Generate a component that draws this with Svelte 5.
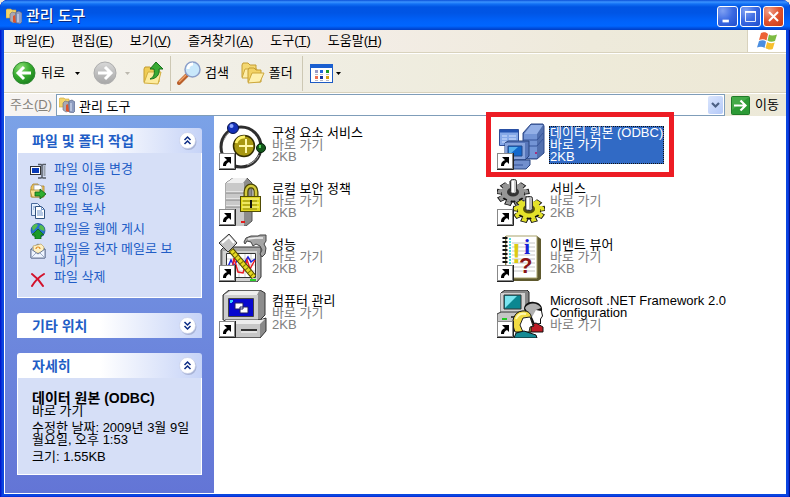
<script>
  const menus = [
    ['파일', 'F'],
    ['편집', 'E'],
    ['보기', 'V'],
    ['즐겨찾기', 'A'],
    ['도구', 'T'],
    ['도움말', 'H']
  ];

  const tasks = [
    { icon: 'rename', label: '파일 이름 변경' },
    { icon: 'move', label: '파일 이동' },
    { icon: 'copy', label: '파일 복사' },
    { icon: 'web', label: '파일을 웹에 게시' },
    { icon: 'mail', label: '파일을 전자 메일로 보내기' },
    { icon: 'delete', label: '파일 삭제' }
  ];

  const items = [
    { icon: 'component', name: '구성 요소 서비스', size: '2KB' },
    { icon: 'odbc', name: '데이터 원본 (ODBC)', size: '2KB' },
    { icon: 'security', name: '로컬 보안 정책', size: '2KB' },
    { icon: 'services', name: '서비스', size: '2KB' },
    { icon: 'performance', name: '성능', size: '2KB' },
    { icon: 'events', name: '이벤트 뷰어', size: '2KB' },
    { icon: 'computer', name: '컴퓨터 관리', size: '2KB' },
    { icon: 'dotnet', name: 'Microsoft .NET Framework 2.0 Configuration', size: '' }
  ];

  const teeth = [0, 40, 80, 120, 160, 200, 240, 280, 320];

  let selected = $state('odbc');
  let tasksOpen = $state(true);
  let placesOpen = $state(false);
  let detailsOpen = $state(true);
  let address = $state('관리 도구');
</script>

{#snippet toolsIcon()}
  <svg class="i16" viewBox="0 0 16 16" aria-hidden="true">
    <path d="M0 2l1-1h4l1 1h4v8H0z" fill="#f3d56b" stroke="#c9a23a" stroke-width=".6" />
    <path d="M4 6l2-2 4 1v9l-3 1-3-2z" fill="#a9a9b4" stroke="#666a78" stroke-width=".6" />
    <path d="M10 4l3-1 3 2v9l-2 2-4-1z" fill="#8d9cc0" stroke="#4d5878" stroke-width=".6" />
    <path d="M7 8l2-1 1 8-3-1z" fill="#e0532a" />
    <path d="M12 6v8" stroke="#dfe7fa" />
  </svg>
{/snippet}

{#snippet caret()}
  <svg class="caret" viewBox="0 0 5 3" aria-hidden="true"><path d="M0 0h5L2.500 3z" fill="currentColor" /></svg>
{/snippet}

{#snippet taskIcon(name)}
  <svg class="i16" viewBox="0 0 16 16" aria-hidden="true">
    {#if name === 'rename'}
      <rect x=".5" y="3.500" width="10" height="8" fill="#fff" stroke="#333" />
      <rect x="2" y="5" width="7" height="5" fill="#0a3bb8" />
      <path d="M8 1.500h3l1 1 1-1h3M12 2v12M8 15h3l1-1 1 1h3" fill="none" stroke="#555c66" stroke-width="1.500" />
      <path d="M14.500 3v10" stroke="#9aa2ad" stroke-width="2" />
    {:else if name === 'move'}
      <path d="M1 4l2-3h5l1 2h5v11H1z" fill="#f0c65a" stroke="#a8812a" stroke-width=".8" />
      <path d="M4 2h6l2 2v5H4z" fill="#fff" stroke="#8a94a8" stroke-width=".7" />
      <path d="M0 7h11l2 7H2z" fill="#fbe194" stroke="#a8812a" stroke-width=".7" />
      <path d="M5 9h5V6l6 5-6 5v-3H5z" fill="#2fae2f" stroke="#0c5f16" stroke-width=".8" />
    {:else if name === 'copy'}
      <path d="M1.500.5h6l3 3v9h-9z" fill="#e4eefc" stroke="#4a6a9c" />
      <path d="M5.500 3.500h6l3 3v9h-9z" fill="#fff" stroke="#33537f" />
      <path d="M11.500 3.500v3h3M7 8h5M7 10h6M7 12h6M3 4h2M3 6h1" fill="none" stroke="#6f93c9" />
    {:else if name === 'web'}
      <circle cx="8" cy="7.500" r="7" fill="#2871cf" stroke="#174886" stroke-width=".7" />
      <path d="M2 4c3-4 5-3 6-2L6 5 3 8zM10 2c3 0 5 3 4.500 6L11 7 9 5zM2 10l4 1v3c-2 0-4-2-4-4z" fill="#57bd4d" />
      <path d="M8 6l6 6h-3v4H5v-4H2z" fill="#1b9b27" stroke="#0b5e16" stroke-width=".7" />
    {:else if name === 'mail'}
      <path d="M1 6l7-5 7 5v9H1z" fill="#c8d4ea" stroke="#61718f" stroke-width=".9" />
      <path d="M3 3l8-2 3 3-1 6H4z" fill="#fdf0c4" stroke="#b29650" stroke-width=".6" />
      <path d="M6 6a2 2 0 1 1 4 0" fill="none" stroke="#e08a22" stroke-width="1.200" />
      <path d="M1 6l7 5 7-5v9H1z" fill="#eef4ff" stroke="#61718f" stroke-width=".9" />
      <path d="M1 15l5-5M15 15l-5-5" stroke="#8c9cba" stroke-width=".8" />
    {:else}
      <path d="M2 3c4 3 8 7 11 12M14 3C9 6 5 10 2 15" fill="none" stroke="#d3122c" stroke-width="2" stroke-linecap="round" />
    {/if}
  </svg>
{/snippet}

{#snippet gear(cx, cy, fill, dark)}
  <g transform="translate({cx} {cy}) scale(1 .75)">
    {#each teeth as a}
      <rect x="-3" y="-16" width="6" height="8" fill={fill} stroke="#111" transform="translate(0 2) rotate({a})" />
    {/each}
    <circle cy="2" r="12" fill="#111" />
    {#each teeth as a}
      <rect x="-2" y="-14" width="4" height="8" fill={fill} transform="rotate({a})" />
    {/each}
    <circle r="11.500" fill={fill} />
    <circle r="6" fill={dark} />
  </g>
{/snippet}

{#snippet fileIcon(name)}
  <svg class="i48" viewBox="0 0 48 48" aria-hidden="true">
    {#if name === 'component'}
      <circle cx="22" cy="25" r="20" fill="none" stroke="#2e2e2e" stroke-width="3" />
      <path d="M5 18a19 19 0 0 1 14-12M40 33a19 19 0 0 1-12 10" fill="none" stroke="#aaa" />
      <circle cx="14" cy="6" r="5.500" fill="#1431b8" stroke="#071248" />
      <circle cx="12.500" cy="4" r="2" fill="#90a9ff" />
      <circle cx="25" cy="24" r="10.500" fill="#a89812" stroke="#342e02" stroke-width="1.500" />
      <path d="M17 21a8 8 0 0 1 9-6" fill="none" stroke="#fff36c" stroke-width="3" />
      <path d="M27 17v14M20 24h14" stroke="#fff8a8" stroke-width="2" />
      <circle cx="42" cy="26" r="4.500" fill="#14591b" stroke="#03200a" />
      <path d="M41 23v3" stroke="#57d65b" stroke-width="2" />
    {:else if name === 'odbc'}
      <path d="M26 11l8-9h12l1 2v27l-7 6H26z" fill="#516fae" stroke="#2c4889" />
      <path d="M27 12l7-9h12l-6 9z" fill="#93afe6" />
      <path d="M27 12h13v24H27z" fill="#7394d5" />
      <path d="M27 18h13l6-7M27 24h13l6-7" fill="none" stroke="#36549a" />
      <path d="M38 31h2" stroke="#a6307c" stroke-width="2" />
      <path d="M2.500 7.500h19v16h-19z" fill="#86a9e8" stroke="#2f4f98" />
      <path d="M3 9h18" stroke="#2453b0" stroke-width="3" />
      <path d="M5 14h5M12 14h7M5 17h5M12 17h7M5 20h5" stroke="#d3e2ff" />
      <path d="M8 21l3-2h21v15l-4 4H8z" fill="#5877ba" stroke="#29447f" />
      <path d="M8 21h20v16H8z" fill="#88a4dc" />
      <path d="M11 24h14v10H11z" fill="#1268cc" stroke="#234888" />
      <path d="M12 33V25h9z" fill="#55b0ee" />
      <path d="M14 41l4-3h15v5l-4 4H14z" fill="#718fcd" stroke="#29447f" />
      <path d="M17 43h9" stroke="#36549a" />
    {:else if name === 'security'}
      <path d="M7 5l7-5h14l5 5v38l-6 5H7z" fill="#8c8c8c" stroke="#555" />
      <path d="M7 5l7-5h14l-4 5z" fill="#efefef" />
      <path d="M7 5h18v43H7z" fill="#c9c9c9" />
      <path d="M7 14h18M7 21h18M7 28h18" stroke="#fff" />
      <path d="M7 15h18l8-5M7 22h18M7 29h18" fill="none" stroke="#848484" />
      <path d="M22 44h4" stroke="#e11c1c" stroke-width="2" />
      <path d="M27 19v-5c0-8 10-8 10 0v5" fill="none" stroke="#4b4704" stroke-width="5" />
      <path d="M27 19v-5c0-8 10-8 10 0v5" fill="none" stroke="#d3c93d" stroke-width="2.500" />
      <rect x="21.500" y="18.500" width="20" height="15" fill="#e0d622" stroke="#514c05" />
      <path d="M23 21h17M23 25h17M23 29h17" stroke="#fffb9e" />
      <path d="M24 23h14M24 27h14M24 31h14" stroke="#8e860d" />
      <path d="M32 22v8" stroke="#111" stroke-width="2" />
    {:else if name === 'services'}
      {@render gear(16, 14, '#969696', '#333')}
      <rect x="13.500" y="1.500" width="6" height="14" rx="2" fill="#c8c8c8" stroke="#333" />
      <path d="M16 3v11" stroke="#fff" stroke-width="2" />
      {@render gear(32, 31, '#e4e22a', '#55520a')}
      <rect x="28.500" y="18.500" width="7" height="14" rx="2" fill="#b7b7b7" stroke="#333" />
      <path d="M31 20v11" stroke="#fff" stroke-width="2" />
    {:else if name === 'performance'}
      <path d="M2 16l3-3h37v30l-4 5H2z" fill="#a6a6a6" stroke="#333" />
      <path d="M4 17h34v30H4z" fill="#d2d2d2" />
      <path d="M7.500 19.500h29v24h-29z" fill="#fff" stroke="#333" />
      <path d="M8 25h28M8 31h28M8 37h28M14 20v23M20 20v23M26 20v23M32 20v23" stroke="#cfcfcf" />
      <path d="M8 35l4-9 3 6 5-9 4 8 5-8 3 5 4-3" fill="none" stroke="#1c22e4" stroke-width="1.500" />
      <path d="M9 39l4-3 2-12 4 14 5 1 4-13 3 9 5-9" fill="none" stroke="#ea1c24" stroke-width="1.500" />
      <path d="M12 16l23 27" stroke="#4a4300" stroke-width="6" />
      <path d="M12 16l23 27" stroke="#e6da21" stroke-width="4" />
      <path d="M12 16l23 27" stroke="#7c7200" stroke-width="4" stroke-dasharray="1 3" />
      <path d="M0 9L10 0l8 9-9 9z" fill="#c4c4c4" stroke="#333" />
      <path d="M3 9l7-6 5 6" fill="none" stroke="#fff" stroke-width="2" />
      <path d="M25 8l2-4 5-2h7l2-1h6v6l-2 3 2 4-1 6-3 3-2-3 2-4-2-4-4-2-3 2-2-4-4-1-2 3z" fill="#a4a4a4" stroke="#444" />
      <path d="M29 5l8-1h7" fill="none" stroke="#efefef" stroke-width="1.500" />
      <path d="M31 46h6" stroke="#28d028" stroke-width="2" />
    {:else if name === 'events'}
      <path d="M8 2h32l4 3v40l-3 2H8z" fill="#5e592e" />
      <path d="M9 2h31v42H9z" fill="#fff" stroke="#a9a26a" />
      <path d="M15 9h23M15 13h23M15 17h23M15 21h23M15 25h23M15 29h23M15 33h23M15 37h23" stroke="#c6c6c6" />
      <path d="M13 4v39" stroke="#4fdcdc" stroke-width="2" stroke-dasharray="2 1" />
      <path d="M8 3v41" stroke="#111" stroke-width="5" stroke-dasharray="2 2" />
      <g font-weight="700">
        <text x="15" y="29" font-size="27" fill="#dccb12">!</text>
        <text x="27" y="20" font-size="22" fill="#1822d8" font-family="Liberation Serif, serif">i</text>
        <text x="22" y="39" font-size="22" fill="#8b1414">?</text>
      </g>
    {:else if name === 'computer'}
      <path d="M4 5l6-5h31l5 3v22l-5 5H4z" fill="#8d8d8d" stroke="#333" />
      <path d="M5 5l6-4h29l-2 4z" fill="#eee" />
      <path d="M5 5h34v25H5z" fill="#cdcdcd" />
      <path d="M9.500 8.500h25v18h-25z" fill="#0808cf" stroke="#444" />
      <path d="M12 13v-2h2" fill="none" stroke="#3cf" stroke-width="2" />
      <path d="M16 13h8v6h-8zM21 17h8v6h-8z" fill="#fff" stroke="#202060" />
      <path d="M2 34l4-4h35l6-2v13l-6 7H2z" fill="#8a8a8a" stroke="#333" />
      <path d="M3 34h38v13H3z" fill="#c7c7c7" />
      <path d="M3 34l4-4h34l5-1-5 5z" fill="#ededed" />
      <path d="M22 40h16" stroke="#333" stroke-width="2" />
      <path d="M22 42h16" stroke="#fff" />
    {:else}
      <path d="M4 3l4-3h22l2 2v18l-3 3H4z" fill="#868686" stroke="#222" />
      <path d="M4 3h24v19H4z" fill="#d0d0d0" />
      <path d="M7 5h17v14H7z" fill="#0b8791" stroke="#333" />
      <path d="M8 18V6h12z" fill="#7be5ef" />
      <path d="M0 24l4-2h24v10H0z" fill="#c5c5c5" stroke="#333" />
      <path d="M5 29h5" stroke="#23c823" stroke-width="2" />
      <path d="M14 27h9" stroke="#444" stroke-width="2" />
      <path d="M27 19c0-5 5-8 10-7 5 0 9 4 8 9l1 5-2 3v5h-5l-6 2z" fill="#111" />
      <path d="M28 18c3-6 13-6 16 0l-5 2 1 6-4 2-4-3z" fill="#b0b0b0" />
      <path d="M39 20l5 1 1 5-2 3v4l-5 1-3-7z" fill="#fff" />
      <path d="M32 35l7-2 7 4v5H31z" fill="#be1d25" stroke="#111" />
      <path d="M17 39c-3-8 0-17 8-18 7-1 10 4 9 8l3 7-3 1v5H18z" fill="#f1db42" stroke="#111" />
      <path d="M26 28l7-1 3 9-3 1-1 5h-6l-3-7z" fill="#fff" stroke="#222" />
      <path d="M19 29c2-5 6-6 10-5" fill="none" stroke="#fff8b0" stroke-width="2" />
      <path d="M17 48l2-5 8-2 6 2 6 2 1 3z" fill="#168b94" stroke="#111" />
    {/if}
    <rect x=".5" y="31.500" width="15" height="15" fill="#fff" stroke="#888" />
    <path d="M0 47.500h16.500V31" fill="none" stroke="#222" />
    <path d="M5 35h7v7l-2-2c-2 1-3 2-3 4H4c0-4 2-5 4-6z" fill="#000" />
  </svg>
{/snippet}

{#snippet chevrons(open)}
  <svg class="chev" viewBox="0 0 18 18" aria-hidden="true">
    <circle cx="9.500" cy="10" r="8" fill="#a9b4d6" />
    <circle cx="8.500" cy="8.500" r="8" fill="#fff" stroke="#c3cbe6" stroke-width=".6" />
    <path d={open ? 'M5.500 8l3-3 3 3M5.500 12l3-3 3 3' : 'M5.500 5l3 3 3-3M5.500 9l3 3 3-3'} fill="none" stroke="#0c2c84" stroke-width="1.500" />
  </svg>
{/snippet}

<div class="window">
  <header class="title">
    {@render toolsIcon()}
    <h1>관리 도구</h1>
    <div class="controls">
      <button aria-label="최소화"><svg viewBox="0 0 21 21"><path d="M5 14h7v3H5z" fill="#fff" /></svg></button>
      <button aria-label="최대화"><svg viewBox="0 0 21 21"><path d="M5 5h11v11H5z" fill="none" stroke="#fff" /><path d="M4.500 5.500h12" stroke="#fff" stroke-width="2" /></svg></button>
      <button class="close" aria-label="닫기"><svg viewBox="0 0 21 21"><path d="M5.500 5.500l10 10M15.500 5.500l-10 10" stroke="#fff" stroke-width="2.200" /></svg></button>
    </div>
  </header>

  <div class="client">
    <nav class="menubar">
      <div class="menus">
        {#each menus as [label, key]}
          <button>{label}(<u>{key}</u>)</button>
        {/each}
      </div>
      <div class="brand">
        <svg viewBox="0 0 20 18" aria-hidden="true">
          <path d="M4 1c3-1 5-1 7 1L9.500 8.500C7.500 7 5 7 2 8z" fill="#ec6234" />
          <path d="M12 2.500c2 1.500 5 1 8 0L18 9c-3 1-5 1-7.500-.5z" fill="#7dbb42" />
          <path d="M2 9c3-1 5-1 7 .5L7.500 16c-2-2-5-1.500-7.500-.5z" fill="#4b8ee0" />
          <path d="M10.200 10c2 1.500 5 1.500 7.500.5l-2 6.500c-3 1-5 .5-7.200-1z" fill="#f7bf2e" />
        </svg>
      </div>
    </nav>

    <div class="toolbar">
      <button class="back">
        <svg class="i24" viewBox="0 0 24 24" aria-hidden="true">
          <defs><radialGradient id="g" cx=".35" cy=".25" r=".9"><stop offset="0" stop-color="#8ade74" /><stop offset=".5" stop-color="#35a92c" /><stop offset="1" stop-color="#13741a" /></radialGradient></defs>
          <circle cx="12" cy="12" r="11" fill="url(#g)" stroke="#2f8a31" />
          <path d="M19 12H7M12 6l-6 6 6 6" fill="none" stroke="#fff" stroke-width="3" />
        </svg>
        <span>뒤로</span>
        {@render caret()}
      </button>
      <button class="forward" aria-label="앞으로" disabled>
        <svg class="i24" viewBox="0 0 24 24" aria-hidden="true">
          <defs><linearGradient id="s" x2="0" y2="1"><stop offset="0" stop-color="#d8d8d8" /><stop offset="1" stop-color="#a6a6a6" /></linearGradient></defs>
          <circle cx="12" cy="12" r="11" fill="url(#s)" stroke="#adadad" />
          <path d="M5 12h12M12 6l6 6-6 6" fill="none" stroke="#fff" stroke-width="3" />
        </svg>
        {@render caret()}
      </button>
      <button class="up" aria-label="위로">
        <svg class="i24" viewBox="0 0 24 24" aria-hidden="true">
          <path d="M3 8l1-2h5l2 2h7v13H3z" fill="#f0cc55" stroke="#c29b2e" />
          <path d="M3 22l4-11h13l-3 12z" fill="#fdeb9d" stroke="#d2ae3f" />
          <path d="M9 18c4-2 5-5 4-10H9l6-7 7 7h-4c1 6-3 10-9 10z" fill="#39aa33" stroke="#15711c" />
        </svg>
      </button>
      <span class="sep"></span>
      <button class="search">
        <svg class="i24" viewBox="0 0 24 24" aria-hidden="true">
          <path d="M2 22l8-8" stroke="#b9602c" stroke-width="4" stroke-linecap="round" />
          <path d="M2 21l7-7" stroke="#f2a46a" stroke-width="1.500" />
          <circle cx="15.500" cy="8.500" r="7.500" fill="#c9e8fb" stroke="#8c9fc9" stroke-width="1.500" />
          <path d="M11 8c0-3 2-5 5-5" fill="none" stroke="#fff" stroke-width="3" />
        </svg>
        <span>검색</span>
      </button>
      <button class="folders">
        <svg class="i24" viewBox="0 0 24 24" aria-hidden="true">
          <path d="M1 4l1-2h5l2 2h6v12H1z" fill="#f4d873" stroke="#c39c33" />
          <path d="M1 17l3-9h12l-3 9z" fill="#fdedaa" stroke="#cda83d" />
          <path d="M7 9l1-2h5l2 2h5v12H7z" fill="#f2d265" stroke="#c39c33" />
          <path d="M7 22l4-10h12l-4 9z" fill="#fef0ae" stroke="#cda83d" />
        </svg>
        <span>폴더</span>
      </button>
      <span class="sep"></span>
      <button class="views" aria-label="보기">
        <svg viewBox="0 0 23 19" aria-hidden="true">
          <rect x=".5" y=".5" width="22" height="18" fill="#fff" stroke="#1c5ac4" />
          <path d="M0 0h23v4H0z" fill="#1a5fd0" />
          <path d="M5 6h3v3H5z" fill="#9a9ac6" /><path d="M10 6h3v3h-3z" fill="#1f66dd" /><path d="M16 6h3v3h-3z" fill="#169c28" />
          <path d="M5 12h3v3H5z" fill="#f07050" /><path d="M10 12h3v3h-3z" fill="#1433a0" /><path d="M16 12h3v3h-3z" fill="#d8a012" />
          <path d="M5 10.500h3M10 10.500h3M16 10.500h3M5 16.500h3M10 16.500h3M16 16.500h3" stroke="#b8b8c4" />
        </svg>
        {@render caret()}
      </button>
    </div>

    <div class="addressbar">
      <label for="address">주소(<u>D</u>)</label>
      <div class="combo">
        {@render toolsIcon()}
        <input id="address" type="text" bind:value={address} />
        <button aria-label="주소 목록"><svg viewBox="0 0 15 18" aria-hidden="true"><path d="M4 7l3.500 3.500L11 7" fill="none" stroke="#4d6185" stroke-width="2.200" /></svg></button>
      </div>
      <button class="go">
        <svg viewBox="0 0 19 19" aria-hidden="true">
          <rect x=".5" y=".5" width="18" height="18" rx="1" fill="#2c9a35" stroke="#1e7a28" />
          <path d="M1 1h17L1 14z" fill="#5cba5c" opacity=".5" />
          <path d="M3 9.500h11M9.500 4.500l5 5-5 5" fill="none" stroke="#fff" stroke-width="2.200" />
        </svg>
        <span>이동</span>
      </button>
    </div>

    <div class="content">
      <aside>
        <section>
          <h2><button onclick={() => (tasksOpen = !tasksOpen)} aria-expanded={tasksOpen}>파일 및 폴더 작업{@render chevrons(tasksOpen)}</button></h2>
          {#if tasksOpen}
            <ul class="body tasks">
              {#each tasks as task}
                <li><a href="#{task.icon}">{@render taskIcon(task.icon)}<span>{task.label}</span></a></li>
              {/each}
            </ul>
          {/if}
        </section>
        <section>
          <h2><button onclick={() => (placesOpen = !placesOpen)} aria-expanded={placesOpen}>기타 위치{@render chevrons(placesOpen)}</button></h2>
        </section>
        <section>
          <h2><button onclick={() => (detailsOpen = !detailsOpen)} aria-expanded={detailsOpen}>자세히{@render chevrons(detailsOpen)}</button></h2>
          {#if detailsOpen}
            <div class="body details">
              <p><strong>데이터 원본 (ODBC)</strong><br />바로 가기</p>
              <p>수정한 날짜: 2009년 3월 9일 월요일, 오후 1:53</p>
              <p>크기: 1.55KB</p>
            </div>
          {/if}
        </section>
      </aside>

      <main>
        {#each items as item}
          <button class="item" class:selected={selected === item.icon} onclick={() => (selected = item.icon)}>
            {@render fileIcon(item.icon)}
            <span class="text">
              <span class="name">{item.name}</span>
              <span>바로 가기</span>
              {#if item.size}<span>{item.size}</span>{/if}
            </span>
            {#if item.icon === 'odbc'}<span class="callout"></span>{/if}
          </button>
        {/each}
      </main>
    </div>
  </div>
</div>

<style>
  :global(body) {
    margin: 0;
    background: #eeeade;
  }
  * {
    box-sizing: border-box;
  }
  .window {
    display: flex;
    flex-direction: column;
    min-height: 100vh;
    padding: 0 4px 4px;
    border-radius: 8px 8px 0 0;
    background: #0a46e0;
    box-shadow: inset 1px 0 #0019cf, inset -1px -1px #00138c, inset 2px 0 #0831d9, inset -2px -2px #0831d9;
    font: 13px/16px "Liberation Sans", "Noto Sans CJK KR", sans-serif;
    color: #000;
  }
  button {
    display: flex;
    align-items: center;
    margin: 0;
    padding: 0;
    border: 0;
    background: none;
    font: inherit;
    color: inherit;
    text-align: left;
  }
  svg {
    display: block;
    flex: none;
  }
  .i16 {
    width: 16px;
    height: 16px;
  }
  .i24 {
    width: 24px;
    height: 24px;
  }
  .i48 {
    width: 48px;
    height: 48px;
  }
  .caret {
    width: 5px;
    height: 3px;
  }

  .title {
    display: flex;
    align-items: center;
    gap: 4px;
    height: 30px;
    margin: 0 -4px;
    padding: 2px 6px 0;
    border-radius: 8px 8px 0 0;
    background: linear-gradient(#0a4fd8 0, #3b93ff 2px, #1270f4 4px, #0054e3 7px, #0055e5 13px, #0062fa 21px, #0066ff 26px, #0050e0 28px, #003dc4 30px);
  }
  h1 {
    flex: 1;
    margin: 0;
    font-size: 15px;
    line-height: 20px;
    font-weight: 500;
    color: #fff;
    text-shadow: 1px 1px #0a2a80;
  }
  .controls {
    display: flex;
    gap: 2px;
  }
  .controls button {
    width: 21px;
    height: 21px;
    border: 1px solid #fff;
    border-radius: 3px;
    background: radial-gradient(circle at 25% 20%, #7fa0f2, #3a69e2 50%, #1f4dcc);
  }
  .controls svg {
    width: 19px;
    height: 19px;
  }
  .controls .close {
    background: radial-gradient(circle at 25% 20%, #f0a08a, #e0532f 50%, #c63a12);
  }

  .client {
    flex: 1;
    display: flex;
    flex-direction: column;
    background: linear-gradient(90deg, #f6f4f2, #f5eeea 35%, #eeeadb 75%, #ece9d8);
  }
  .menubar {
    display: flex;
    height: 23px;
    border-bottom: 1px solid #d8d2bd;
  }
  .menus {
    flex: 1;
    display: flex;
    gap: 17px;
    padding-left: 10px;
  }
  .brand {
    display: flex;
    align-items: center;
    justify-content: center;
    width: 39px;
    border-left: 1px solid #d8d2bd;
    background: #fff;
  }
  .brand svg {
    width: 20px;
    height: 18px;
  }
  .toolbar {
    display: flex;
    align-items: center;
    height: 40px;
    border-top: 1px solid #fff;
    border-bottom: 1px solid #d8d2bd;
    padding-left: 8px;
    background: linear-gradient(90deg, #f5f3ee, #f0eee4 35%, #eeebda 70%, #ede8d6);
  }
  .back {
    gap: 5px;
  }
  .back .caret {
    margin-left: 5px;
  }
  .forward {
    gap: 8px;
    margin-left: 13px;
    color: #bbb8ae;
  }
  .up {
    margin: 0 5px 0 11px;
  }
  .sep {
    width: 1px;
    height: 35px;
    background: #cdc8b4;
  }
  .search {
    gap: 4px;
    margin: 0 12px 0 6px;
  }
  .folders {
    gap: 4px;
    margin-right: 9px;
  }
  .views {
    gap: 3px;
    margin-left: 7px;
  }
  .views svg:first-child {
    width: 23px;
    height: 19px;
  }
  .addressbar {
    display: flex;
    align-items: center;
    height: 23px;
    padding: 0 7px 0 6px;
    border-top: 1px solid #fff;
  }
  .addressbar label {
    margin-right: 4px;
    color: #85827a;
  }
  .combo {
    flex: 1;
    display: flex;
    align-items: center;
    gap: 4px;
    min-width: 0;
    height: 22px;
    padding: 0 1px 0 2px;
    border: 1px solid #7f9db9;
    background: #fff;
  }
  .combo input {
    flex: 1;
    min-width: 0;
    height: 18px;
    padding: 0;
    border: 0;
    outline: 0;
    background: none;
    font: inherit;
    color: inherit;
  }
  .combo button {
    width: 15px;
    height: 18px;
    border-radius: 2px;
    background: linear-gradient(135deg, #dbe6fd, #b4c9f8);
  }
  .combo button svg {
    width: 15px;
    height: 18px;
  }
  .go {
    gap: 5px;
    margin-left: 6px;
  }
  .go svg {
    width: 19px;
    height: 19px;
  }

  .content {
    flex: 1;
    display: flex;
    border: solid #fff;
    border-width: 0 0 1px 1px;
    background: #fff;
  }
  aside {
    display: flex;
    flex-direction: column;
    gap: 15px;
    width: 209px;
    padding: 12px 12px 18px;
    background: linear-gradient(#7ba2e7, #6375d6);
  }
  h2 {
    margin: 0;
    font-size: 14px;
    line-height: 16px;
  }
  h2 button {
    justify-content: space-between;
    width: 100%;
    height: 25px;
    padding: 0 5px 0 15px;
    border-radius: 3px 3px 0 0;
    background: linear-gradient(90deg, #fff 45%, #c6d3f7);
    font-weight: 700;
    color: #215dc6;
  }
  .chev {
    width: 18px;
    height: 18px;
  }
  .body {
    margin: 0;
    border: 1px solid #fff;
    border-top: 0;
    background: #d6dff7;
    line-height: 12px;
  }
  .tasks {
    padding: 10px 24px 6px 12px;
    list-style: none;
  }
  .tasks a {
    display: flex;
    align-items: flex-start;
    gap: 8px;
    min-height: 20px;
    padding-bottom: 4px;
    color: #215dc6;
    text-decoration: none;
  }
  .tasks span {
    word-break: break-all;
  }
  .details {
    display: flex;
    flex-direction: column;
    gap: 5px;
    padding: 14px 10px 11px 14px;
    word-break: keep-all;
  }
  .details p {
    margin: 0;
  }
  .details strong {
    font-size: 14px;
  }

  main {
    flex: 1;
    display: grid;
    grid-template-columns: repeat(auto-fill, 278px);
    grid-auto-rows: 48px;
    gap: 8px 0;
    padding: 6px 0 0 5px;
  }
  .item {
    position: relative;
    align-items: flex-start;
    gap: 4px;
  }
  .text {
    display: flex;
    flex-direction: column;
    margin-top: 4px;
    padding: 0 1px;
    border: 1px solid transparent;
    border-width: 1px 0;
    max-width: 190px;
    line-height: 12px;
    color: #808080;
  }
  .name {
    color: #000;
  }
  .selected .text {
    border: 1px dotted #111;
    padding: 0;
    background: #316ac5;
    color: #fff;
  }
  .selected .name {
    color: #fff;
  }
  .callout {
    position: absolute;
    inset: -10px 101px -7px -11px;
    border: 5px solid #ed1c24;
    pointer-events: none;
  }
</style>
